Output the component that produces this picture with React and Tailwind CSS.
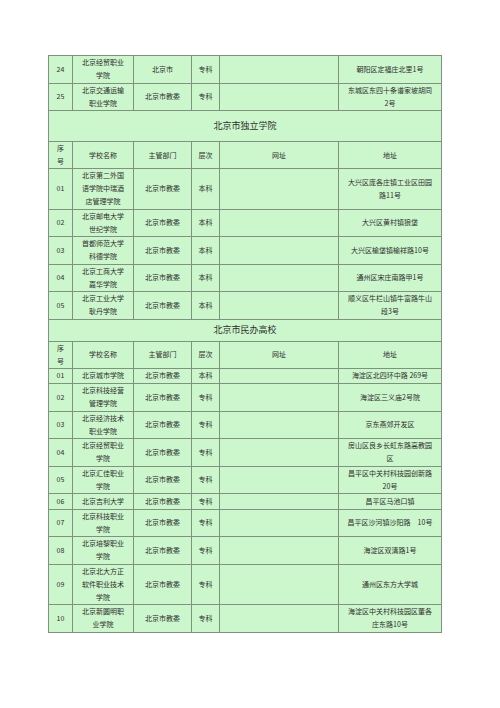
const sectionA = [
  { no: '24', name: ['北京经贸职业', '学院'], dept: '北京市', level: '专科', addr: ['朝阳区定福庄北里1号'] },
  { no: '25', name: ['北京交通运输', '职业学院'], dept: '北京市教委', level: '专科', addr: ['东城区东四十条谱家坡胡同', '2号'] },
];

const sectionB = [
  { no: '01', name: ['北京第二外国', '语学院中瑞酒', '店管理学院'], dept: '北京市教委', level: '本科', addr: ['大兴区庞各庄镇工业区田园', '路11号'] },
  { no: '02', name: ['北京邮电大学', '世纪学院'], dept: '北京市教委', level: '本科', addr: ['大兴区黄村镇狼垡'] },
  { no: '03', name: ['首都师范大学', '科德学院'], dept: '北京市教委', level: '本科', addr: ['大兴区榆垡镇榆祥路10号'] },
  { no: '04', name: ['北京工商大学', '嘉华学院'], dept: '北京市教委', level: '本科', addr: ['通州区宋庄南路甲1号'] },
  { no: '05', name: ['北京工业大学', '耿丹学院'], dept: '北京市教委', level: '本科', addr: ['顺义区牛栏山镇牛富路牛山', '段3号'] },
];

const sectionC = [
  { no: '01', name: ['北京城市学院'], dept: '北京市教委', level: '本科', addr: ['海淀区北四环中路 269号'] },
  { no: '02', name: ['北京科技经营', '管理学院'], dept: '北京市教委', level: '专科', addr: ['海淀区三义庙2号院'] },
  { no: '03', name: ['北京经济技术', '职业学院'], dept: '北京市教委', level: '专科', addr: ['京东燕郊开发区'] },
  { no: '04', name: ['北京经贸职业', '学院'], dept: '北京市教委', level: '专科', addr: ['房山区良乡长虹东路高教园', '区'] },
  { no: '05', name: ['北京汇佳职业', '学院'], dept: '北京市教委', level: '专科', addr: ['昌平区中关村科技园创新路', '20号'] },
  { no: '06', name: ['北京吉利大学'], dept: '北京市教委', level: '专科', addr: ['昌平区马池口镇'] },
  { no: '07', name: ['北京科技职业', '学院'], dept: '北京市教委', level: '专科', addr: ['昌平区沙河镇沙阳路　10号'] },
  { no: '08', name: ['北京培黎职业', '学院'], dept: '北京市教委', level: '专科', addr: ['海淀区双清路1号'] },
  { no: '09', name: ['北京北大方正', '软件职业技术', '学院'], dept: '北京市教委', level: '专科', addr: ['通州区东方大学城'] },
  { no: '10', name: ['北京新圆明职', '业学院'], dept: '北京市教委', level: '专科', addr: ['海淀区中关村科技园区董各', '庄东路10号'] },
];

const rowHeight = { 1: 'h-[15.5px]', 2: 'h-[27.5px]', 3: 'h-[40.5px]' };

const cell = 'border border-[#7f927f] text-center align-middle p-0 leading-[13px]';

function Lines({ lines }) {
  return lines.map((l, i) => (
    <span key={i} className="block whitespace-pre">{l}</span>
  ));
}

function Row({ r }) {
  const n = Math.max(r.name.length, r.addr.length);
  return (
    <tr className={rowHeight[n]}>
      <td className={cell}>{r.no}</td>
      <td className={cell}><Lines lines={r.name} /></td>
      <td className={cell}>{r.dept}</td>
      <td className={cell}>{r.level}</td>
      <td className={cell}></td>
      <td className={cell}><Lines lines={r.addr} /></td>
    </tr>
  );
}

function HeadRow() {
  return (
    <tr className="h-[27px]">
      <td className={cell}><span className="block">序</span><span className="block">号</span></td>
      <td className={cell}>学校名称</td>
      <td className={cell}>主管部门</td>
      <td className={cell}>层次</td>
      <td className={cell}>网址</td>
      <td className={cell}>地址</td>
    </tr>
  );
}

function SectionTitle({ title, h }) {
  return (
    <tr className={h}>
      <td colSpan={6} className="border border-[#7f927f] text-center align-middle p-0 text-[9px] leading-[12px]">
        {title}
      </td>
    </tr>
  );
}

export default function App() {
  return (
    <div className="w-[500px] h-[708px] bg-white pt-[55px] pl-[48px]">
      <table
        className="table-fixed border-collapse w-[393px] bg-[#ccf6cc] text-[#2e2e2e] text-[7px]"
        style={{ fontFamily: '"Noto Sans CJK SC", "Liberation Serif", serif' }}
      >
        <colgroup>
          <col className="w-[24px]" />
          <col className="w-[61px]" />
          <col className="w-[58px]" />
          <col className="w-[28px]" />
          <col className="w-[119px]" />
          <col className="w-[103px]" />
        </colgroup>
        <tbody>
          {sectionA.map((r) => <Row key={'a' + r.no} r={r} />)}
          <SectionTitle title="北京市独立学院" h="h-[31px]" />
          <HeadRow />
          {sectionB.map((r) => <Row key={'b' + r.no} r={r} />)}
          <SectionTitle title="北京市民办高校" h="h-[22px]" />
          <HeadRow />
          {sectionC.map((r) => <Row key={'c' + r.no} r={r} />)}
        </tbody>
      </table>
    </div>
  );
}
